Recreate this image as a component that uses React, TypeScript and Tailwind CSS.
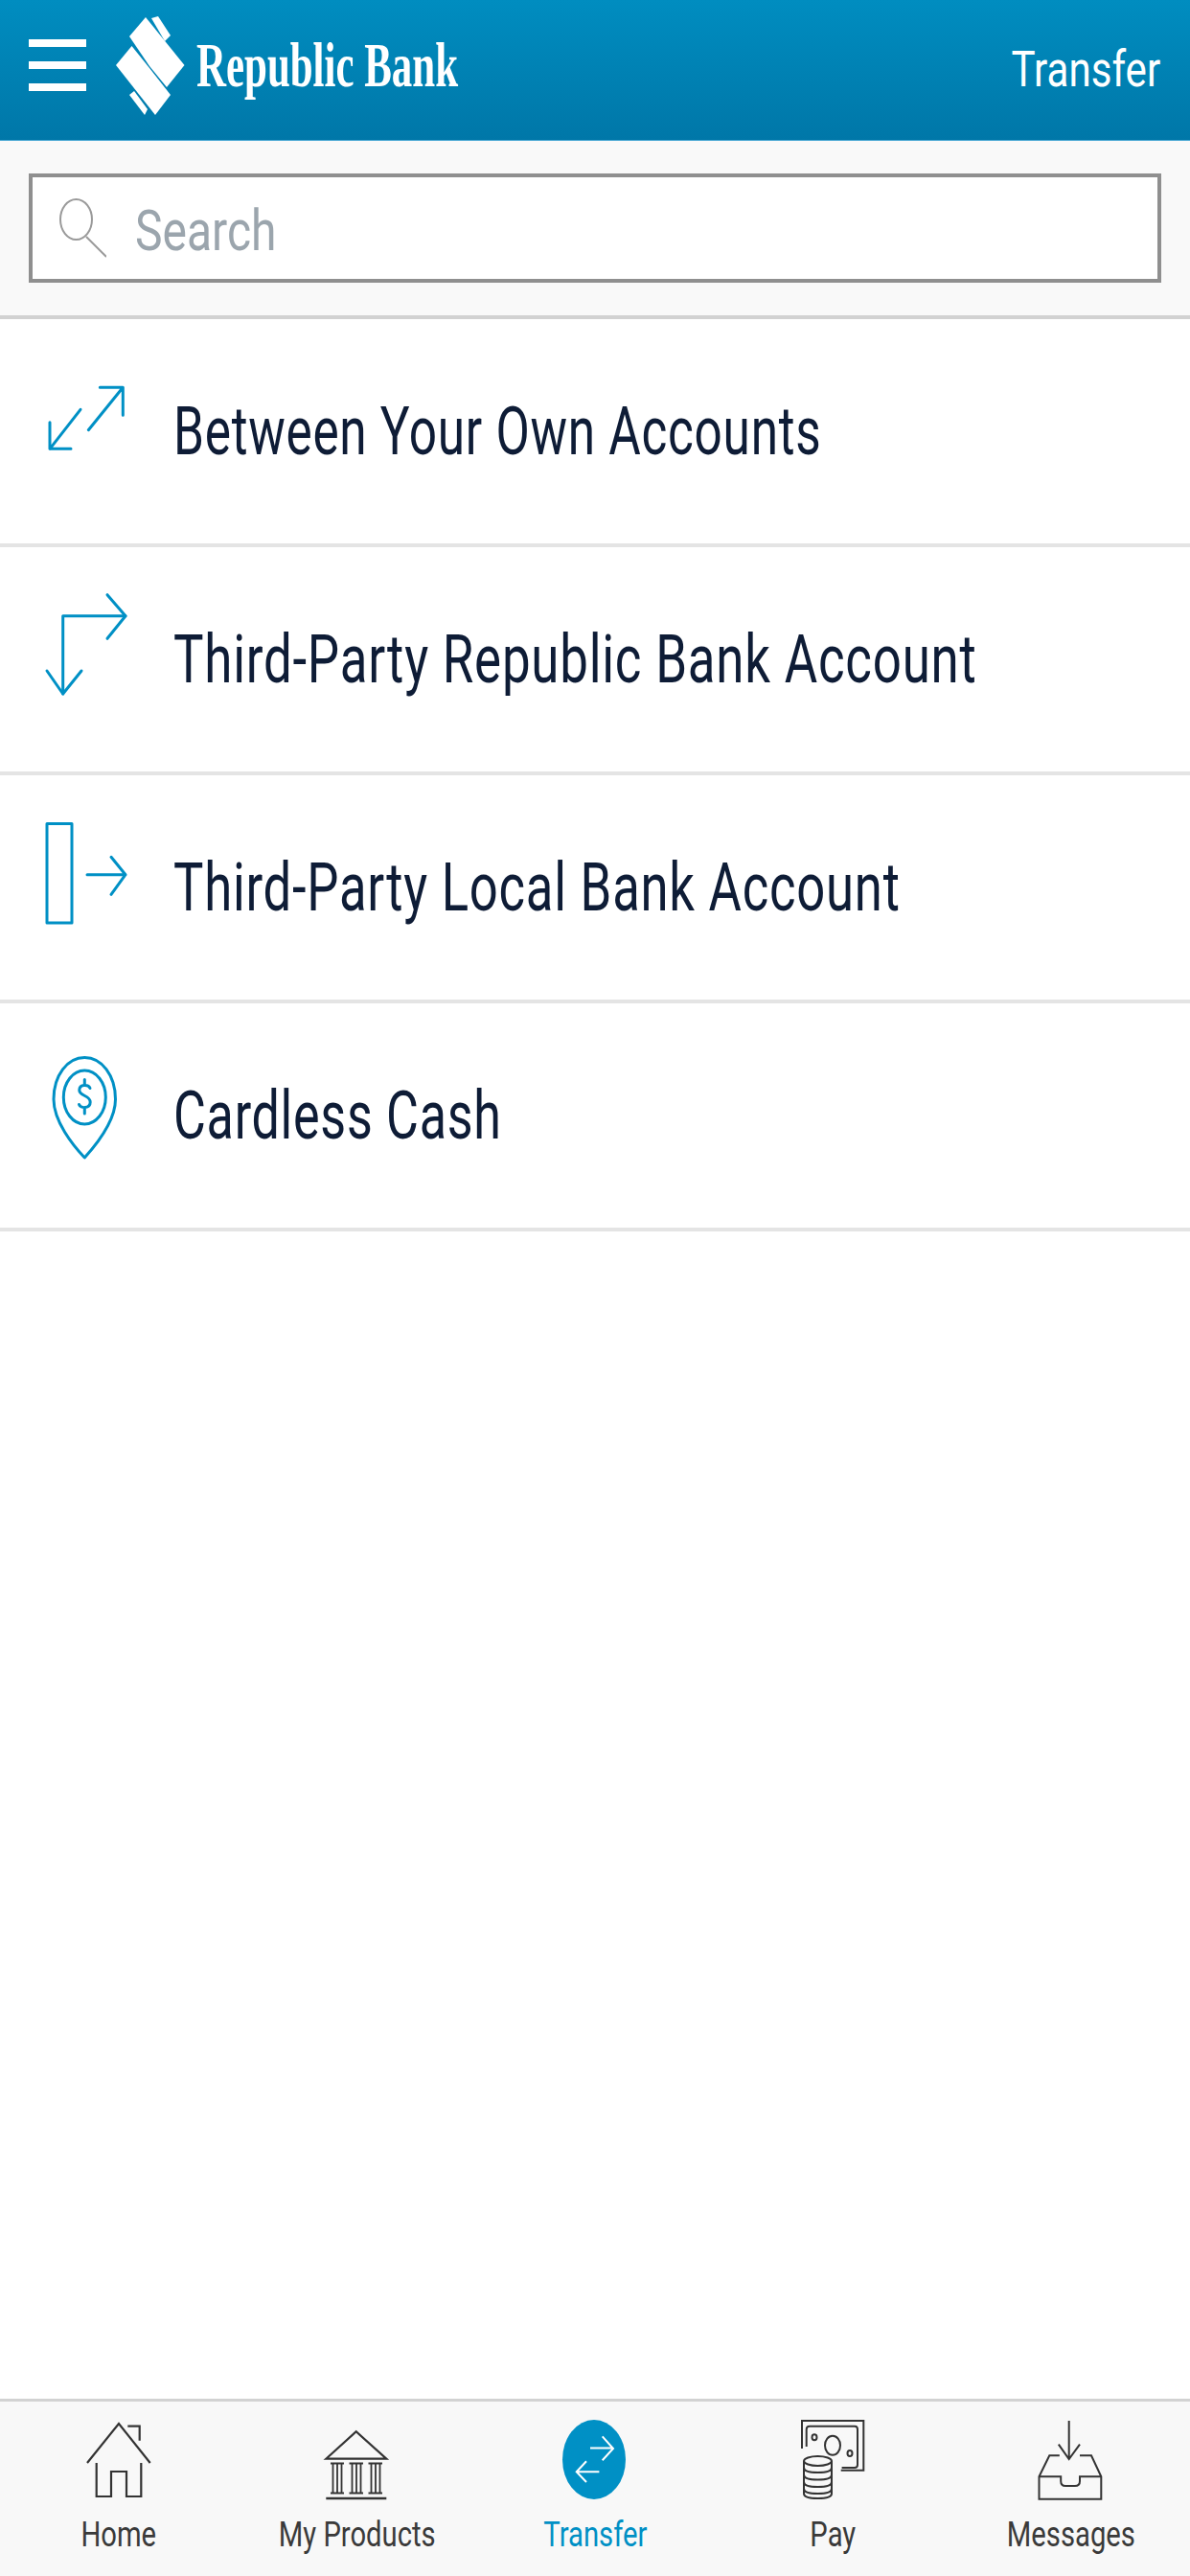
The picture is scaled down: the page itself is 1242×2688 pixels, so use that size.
const blue = "#0090c5";
const dark = "#333333";

const options = [
  {
    label: "Between Your Own Accounts",
    fit: "scale-x-[0.733]",
    box: "40 380 100 140",
    icon: (
      <>
        <path d="M92.3 448.7 128.3 404.3M104.3 404.3H128.3V433.3" />
        <path d="M84 427.3 52 468.3M52 440.7V468.3H74" />
      </>
    ),
  },
  {
    label: "Third-Party Republic Bank Account",
    fit: "scale-x-[0.755]",
    box: "40 618 100 140",
    icon: (
      <>
        <path d="M131 642.7H65.7V724" />
        <path d="M112 620.7 131 642.7 112 666.3M49 700 65.7 724 85 700" />
      </>
    ),
  },
  {
    label: "Third-Party Local Bank Account",
    fit: "scale-x-[0.752]",
    box: "40 856 100 140",
    icon: (
      <>
        <rect x="49" y="859.5" width="26" height="103.5" />
        <path d="M91 912.7H131M116 894.3 131 912.7 116 933.3" />
      </>
    ),
  },
  {
    label: "Cardless Cash",
    fit: "scale-x-[0.743]",
    box: "40 1094 100 140",
    icon: (
      <>
        <path d="M88.3 1103.5C106 1103.5 120.5 1122 120.5 1147C120.5 1170 100 1195 88.3 1208C76 1195 56 1170 56 1147C56 1122 70.5 1103.5 88.3 1103.5Z" />
        <ellipse cx="88.3" cy="1145" rx="22" ry="28" />
        <path d="M94 1135.5C92.5 1131.5 83 1131 82.8 1137.5C82.6 1144 94.2 1142.5 94.2 1150C94.2 1157 84 1157 82.5 1152.5M88.3 1126.5V1131.5M88.3 1156.5V1162" />
      </>
    ),
  },
];

const HomeIcon = () => (
  <svg width="80" height="90" viewBox="84 2522 80 90" fill="none" stroke={dark} strokeWidth="2.2">
    <path d="M91 2570 124 2529 156.7 2570" />
    <path d="M100.7 2570V2605H116V2579H132V2605H147.3V2570" />
    <path d="M133.3 2531.7H145.7V2546.7" />
  </svg>
);

const BankIcon = () => (
  <svg width="80" height="90" viewBox="332 2522 80 90" fill="none" stroke={dark} strokeWidth="1.8">
    <path d="M339.3 2565.7 370.7 2537.3 402.3 2565.7Z" strokeWidth="2.2" />
    <path d="M339.3 2607H402.3" strokeWidth="2.4" />
    <path d="M344 2570.5H358M344 2601.5H358M346.5 2571V2601M351 2571V2601M355.5 2571V2601" />
    <path d="M363.5 2570.5H378M363.5 2601.5H378M366.5 2571V2601M371 2571V2601M375.5 2571V2601" />
    <path d="M383.5 2570.5H398M383.5 2601.5H398M386.5 2571V2601M391 2571V2601M395.5 2571V2601" />
  </svg>
);

const TransferIcon = () => (
  <svg width="80" height="90" viewBox="581 2522 80 90" fill="none" stroke="#ffffff" strokeWidth="2">
    <ellipse cx="620" cy="2566.5" rx="33" ry="41.5" fill={blue} stroke="none" />
    <path d="M616 2554.5H639.6M628.7 2542.3 640 2555 628.7 2567.3" />
    <path d="M601.7 2579.3H625.4M612 2568.3 601.7 2579.3 612 2590" />
  </svg>
);

const PayIcon = () => (
  <svg width="80" height="90" viewBox="829 2522 80 90" fill="none" stroke={dark} strokeWidth="2">
    <path d="M837 2555V2526H901.3V2577.7H877.7" />
    <path d="M841.7 2553V2535Q841.7 2531.7 845 2531.7H892Q895 2531.7 895 2535V2572Q895 2575 892 2575H878.6" />
    <ellipse cx="869" cy="2551.7" rx="8" ry="10" />
    <ellipse cx="850" cy="2543.3" rx="2.5" ry="3" />
    <ellipse cx="887" cy="2560" rx="2.5" ry="3" />
    <ellipse cx="853.5" cy="2568" rx="14.5" ry="5" fill="#f8f8f8" />
    <path d="M839 2568V2602Q839 2607 853.5 2607T868 2602V2568" />
    <path d="M839 2575Q839 2580 853.5 2580T868 2575M839 2582.5Q839 2587.5 853.5 2587.5T868 2582.5M839 2590Q839 2595 853.5 2595T868 2590M839 2597Q839 2602 853.5 2602T868 2597" />
  </svg>
);

const MessagesIcon = () => (
  <svg width="80" height="90" viewBox="1078 2522 80 90" fill="none" stroke={dark} strokeWidth="2">
    <path d="M1115.7 2526V2566M1104.8 2550.7 1115.7 2566 1127 2550.7" />
    <path d="M1105.8 2562.3H1095.3L1084.5 2584.3V2607.7H1149.3V2584.3L1139 2562.3H1127" />
    <path d="M1084.5 2584.3H1107.2V2589Q1107.2 2594 1112 2594H1122Q1127 2594 1127 2589V2584.3H1149.3" />
  </svg>
);

const tabs = [
  { label: "Home", icon: <HomeIcon /> },
  { label: "My Products", icon: <BankIcon /> },
  { label: "Transfer", icon: <TransferIcon />, active: true },
  { label: "Pay", icon: <PayIcon /> },
  { label: "Messages", icon: <MessagesIcon /> },
];

export default function App() {
  return (
    <div className="flex h-[2688px] w-[1242px] flex-col overflow-hidden bg-white font-['Roboto',sans-serif]">
      <header className="flex h-[147px] shrink-0 items-center justify-between border-b border-[#4aa8d4] bg-gradient-to-b from-[#008dc0] to-[#0077a8] pl-[30px] pr-[31px]">
        <div className="mb-[10px] flex items-center">
          <div className="flex w-[60px] flex-col gap-[15px]">
            <div className="h-[8px] bg-white" />
            <div className="h-[8px] bg-white" />
            <div className="h-[8px] bg-white" />
          </div>
          <svg className="ml-[31px]" width="72" height="103" viewBox="121 16 72 103" fill="#ffffff">
            <path d="M152 17 192.5 67 174 90 156 68 135 37Z" />
            <path d="M121 67 137.5 47 156 70 178 98 162 119Z" />
            <path d="M158 18 165 16 178 36 172 42Z" />
            <path d="M135 98 140 94 154 113 151 119Z" />
          </svg>
          <span className="ml-[12px] origin-left scale-x-[0.66] whitespace-nowrap font-['Liberation_Serif',serif] text-[65px] font-bold leading-none text-white">
            Republic Bank
          </span>
        </div>
        <span className="origin-right scale-x-[0.81] whitespace-nowrap text-[52px] font-normal leading-none text-white">
          Transfer
        </span>
      </header>

      <div className="h-[186px] shrink-0 border-b-4 border-[#d2d2d2] bg-[#f9f9f9] px-[30px] pt-[34px]">
        <div className="flex h-[114px] w-[1182px] items-center border-[4px] border-[#8f8f8f] bg-white pl-[27px]">
          <svg width="50" height="64" viewBox="61 206 50 64" fill="none" stroke="#9a9a9a" strokeWidth="2">
            <ellipse cx="79.5" cy="229" rx="16.5" ry="21" />
            <path d="M90 247 111 268" />
          </svg>
          <span className="ml-[30px] mt-[6px] origin-left scale-x-[0.8] whitespace-nowrap text-[60px] font-normal leading-none text-[#9ba5ad]">
            Search
          </span>
        </div>
      </div>

      <main className="flex-1">
        {options.map((o) => (
          <div key={o.label} className="flex h-[238px] items-center border-b-4 border-[#e4e4e4] pl-[40px]">
            <svg
              className="shrink-0"
              width="100"
              height="140"
              viewBox={o.box}
              fill="none"
              stroke={blue}
              strokeWidth="3"
              strokeLinecap="round"
              strokeLinejoin="round"
            >
              {o.icon}
            </svg>
            <span className={`ml-[41px] origin-left ${o.fit} whitespace-nowrap text-[70px] font-normal leading-none tracking-[1px] text-[#0e1c36]`}>
              {o.label}
            </span>
          </div>
        ))}
      </main>

      <nav className="grid h-[185px] shrink-0 grid-cols-5 border-t-[3px] border-[#d2d2d2] bg-[#f8f8f8]">
        {tabs.map((t) => (
          <div key={t.label} className="flex flex-col items-center pt-[16px]">
            {t.icon}
            <span
              className={
                t.active
                  ? "mt-[14px] scale-x-[0.79] whitespace-nowrap text-[37px] font-normal leading-none text-[#0090c5]"
                  : "mt-[14px] scale-x-[0.79] whitespace-nowrap text-[37px] font-normal leading-none text-[#3a3a3a]"
              }
            >
              {t.label}
            </span>
          </div>
        ))}
      </nav>
    </div>
  );
}
